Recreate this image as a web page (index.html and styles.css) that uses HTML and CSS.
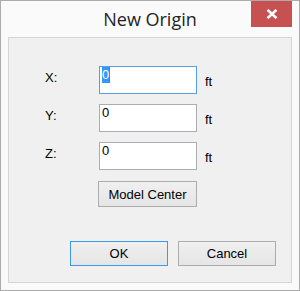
FILE: index.html
```html
<!DOCTYPE html>
<html lang="en">
<head>
    <meta charset="UTF-8">
    <meta name="viewport" content="width=device-width, initial-scale=1.0">
    <title>New Origin</title>
    <link rel="stylesheet" href="styles.css">
</head>
<body>
    <div class="window">
        <div class="titlebar">
            <div></div>
            <div class="title">New Origin</div>
            <div class="close-btn">
                <svg width="12" height="10" viewBox="0 0 12 10">
                    <path d="M1.5 0.8 L10.5 9.2 M10.5 0.8 L1.5 9.2" stroke="#fff" stroke-width="2.6" fill="none"/>
                </svg>
            </div>
        </div>

        <div class="panel">
            <div class="fields">
                <div class="label">X:</div>
                <div class="field focused"><span class="selected">0</span></div>
                <div class="unit">ft</div>

                <div class="label">Y:</div>
                <div class="field">0</div>
                <div class="unit">ft</div>

                <div class="label">Z:</div>
                <div class="field">0</div>
                <div class="unit">ft</div>
            </div>

            <button class="btn center-btn">Model Center</button>

            <div class="footer">
                <button class="btn default">OK</button>
                <button class="btn">Cancel</button>
            </div>
        </div>
    </div>
</body>
</html>
```

FILE: styles.css
```css
body {
    margin: 0;
    font-family: 'Liberation Sans', Arial, sans-serif;
    font-size: 13px;
    color: #000;
}

.window {
    width: 300px;
    height: 291px;
    box-sizing: border-box;
    border: 1px solid #ababab;
    background: #fafafa;
    display: flex;
    flex-direction: column;
}

.titlebar {
    height: 36px;
    display: grid;
    grid-template-columns: 1fr auto 1fr;
    padding: 0 7px;
}

.title {
    font-family: 'Open Sans', sans-serif;
    font-size: 18px;
    line-height: 24px;
    padding-top: 6px;
    color: #1f2328;
}

.close-btn {
    justify-self: end;
    width: 41px;
    height: 26px;
    background: #c75050;
    display: flex;
    align-items: center;
    justify-content: center;
}

.panel {
    height: 246px;
    box-sizing: border-box;
    margin: 0 7px;
    border: 1px solid #d5d5d5;
    background: #f0f0f0;
    padding: 28px 0 0 36px;
}

.fields {
    display: grid;
    grid-template-columns: 54px 98px auto;
    grid-auto-rows: 28px;
    row-gap: 10px;
}

.label {
    padding-top: 4px;
    line-height: 16px;
}

.unit {
    padding: 8px 0 0 8px;
    line-height: 16px;
}

.field {
    box-sizing: border-box;
    border: 1px solid #abadb3;
    background: #fff;
    padding: 0 2px;
    line-height: 16px;
}

.field.focused {
    border-color: #569de5;
}

.selected {
    display: inline-block;
    background: #3399ff;
    color: #fff;
    border-right: 1px solid #cc6600;
}

.btn {
    font-family: 'Liberation Sans', Arial, sans-serif;
    font-size: 13px;
    color: #000;
    box-sizing: border-box;
    width: 98px;
    height: 25px;
    padding: 0;
    border: 1px solid #acacac;
    background: linear-gradient(#f0f0f0, #e5e5e5);
}

.btn.default {
    border-color: #3c9aeb;
}

.center-btn {
    display: block;
    width: 99px;
    height: 26px;
    margin: 11px 0 0 53px;
}

.footer {
    display: flex;
    gap: 10px;
    margin: 34px 0 0 25px;
}
```
